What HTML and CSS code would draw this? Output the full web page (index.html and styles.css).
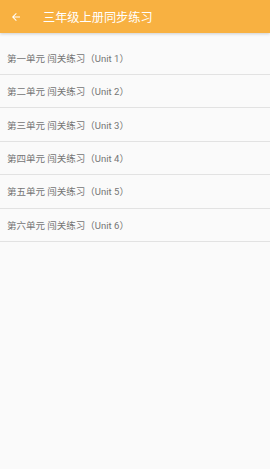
FILE: index.html
```html
<!DOCTYPE html>
<html>
<head>
<meta charset="utf-8">
<link rel="stylesheet" href="styles.css">
</head>
<body>
<div class="app">
  <header class="bar">
    <svg class="back" width="12" height="12" viewBox="0 0 24 24"><path d="M20 11H7.83l5.59-5.59L12 4l-8 8 8 8 1.41-1.41L7.83 13H20v-2z" fill="#fff"/></svg>
    <span class="title">三年级上册同步练习</span>
  </header>
  <ul class="list">
    <li class="row">第一单元 闯关练习（Unit 1）</li>
    <li class="row">第二单元 闯关练习（Unit 2）</li>
    <li class="row">第三单元 闯关练习（Unit 3）</li>
    <li class="row">第四单元 闯关练习（Unit 4）</li>
    <li class="row">第五单元 闯关练习（Unit 5）</li>
    <li class="row">第六单元 闯关练习（Unit 6）</li>
  </ul>
</div>
</body>
</html>
```
FILE: styles.css
```css
html, body {
  margin: 0;
  padding: 0;
  background: #fafafa;
}
.app {
  font-family: Roboto, "Noto Sans CJK SC", sans-serif;
  width: 270px;
  height: 469px;
  background: #fafafa;
}
.bar {
  height: 33px;
  background: #f8b141;
  display: flex;
  align-items: center;
  box-shadow: 0 1px 3px rgba(0,0,0,0.18);
  position: relative;
  z-index: 1;
}
.back {
  margin-left: 10px;
  margin-right: 21px;
}
.title {
  color: #fff;
  font-size: 12.2px;
}
.list {
  list-style: none;
  margin: 0;
  padding: 8.6px 0 0;
}
.row {
  height: 32.4px;
  border-bottom: 1px solid #e2e2e2;
  display: flex;
  align-items: center;
  padding-left: 7px;
  font-size: 9.5px;
  color: #757575;
}
```
